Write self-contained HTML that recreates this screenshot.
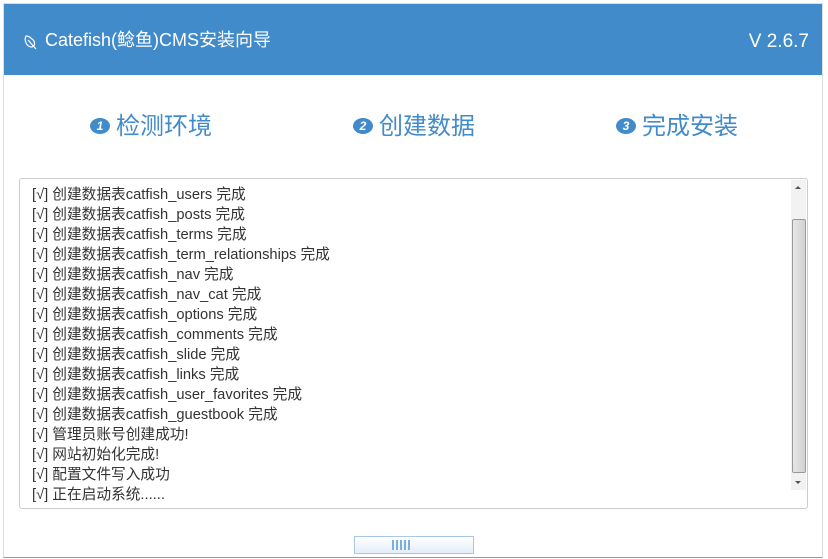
<!DOCTYPE html>
<html><head><meta charset="utf-8"><style>
body{margin:0;width:828px;height:559px;background:#fff;position:relative;overflow:hidden;font-family:"Liberation Sans","Noto Sans CJK SC",sans-serif}
.frame{position:absolute;left:3px;top:3px;width:818px;height:553px;border:1px solid #ddd;border-bottom:1px solid #999}
.hdr{position:absolute;left:4px;top:4px;width:818px;height:71px;background:#428bca;color:#fff;font-size:18px}
.hdr .t{position:absolute;left:41px;top:24px;line-height:24px}
.hdr .v{position:absolute;right:13px;top:26px;font-size:19px;line-height:24px}
.step{position:absolute;top:111px;color:#428bca;font-size:24px;line-height:32px}
.step b{display:inline-block;width:20px;height:16px;border-radius:50%;background:#428bca;color:#fff;font-size:12px;font-style:italic;text-align:center;line-height:16px;vertical-align:middle;margin-right:6px;position:relative;top:-2px}
.box{position:absolute;left:19px;top:178px;width:787px;height:329px;border:1px solid #ccc;border-radius:3px;font-size:14.7px;color:#333}
.lines{position:absolute;left:12px;top:6px;line-height:20px}
.sb{position:absolute;right:1px;top:1px;width:15px;height:310px;background:#f2f2f2}
.thumb{position:absolute;left:1px;top:39px;width:12px;height:252px;background:linear-gradient(90deg,#e6e6e6,#d2d2d2);border:1px solid #999;border-radius:2px}
.prog{position:absolute;left:354px;top:536px;width:118px;height:16px;border:1px solid #a9c8e8;background:linear-gradient(#fff,#e3eef8)}
</style></head><body>
<div class="frame"></div>
<div class="hdr"><svg style="position:absolute;left:19px;top:30px" width="16" height="16" viewBox="0 0 16 16"><path d="M3 2C1 6 3 12 8 13C12 13 13 8 9 5C7 3 5 2 3 2ZM5 6L13 15" fill="none" stroke="#fff" stroke-width="1.2"/></svg><span class="t">Catefish(鲶鱼)CMS安装向导</span><span class="v">V 2.6.7</span></div>
<div class="step" style="left:90px"><b>1</b>检测环境</div>
<div class="step" style="left:353px"><b>2</b>创建数据</div>
<div class="step" style="left:616px"><b>3</b>完成安装</div>
<div class="box"><div class="lines">
[√] 创建数据表catfish_users 完成<br>[√] 创建数据表catfish_posts 完成<br>[√] 创建数据表catfish_terms 完成<br>[√] 创建数据表catfish_term_relationships 完成<br>[√] 创建数据表catfish_nav 完成<br>[√] 创建数据表catfish_nav_cat 完成<br>[√] 创建数据表catfish_options 完成<br>[√] 创建数据表catfish_comments 完成<br>[√] 创建数据表catfish_slide 完成<br>[√] 创建数据表catfish_links 完成<br>[√] 创建数据表catfish_user_favorites 完成<br>[√] 创建数据表catfish_guestbook 完成<br>[√] 管理员账号创建成功!<br>[√] 网站初始化完成!<br>[√] 配置文件写入成功<br>[√] 正在启动系统......
</div>
<div class="sb"><div style="position:absolute;left:4px;top:6px;border:3px solid transparent;border-bottom:3px solid #555;border-top:0"></div><div class="thumb"></div><div style="position:absolute;left:4px;top:301px;border:3px solid transparent;border-top:3px solid #555;border-bottom:0"></div></div>
</div>
<div class="prog"><div style="position:absolute;left:37px;top:3px;width:20px;height:10px;background:repeating-linear-gradient(90deg,#7aaedc 0 2px,transparent 2px 4px)"></div></div>
</body></html>
